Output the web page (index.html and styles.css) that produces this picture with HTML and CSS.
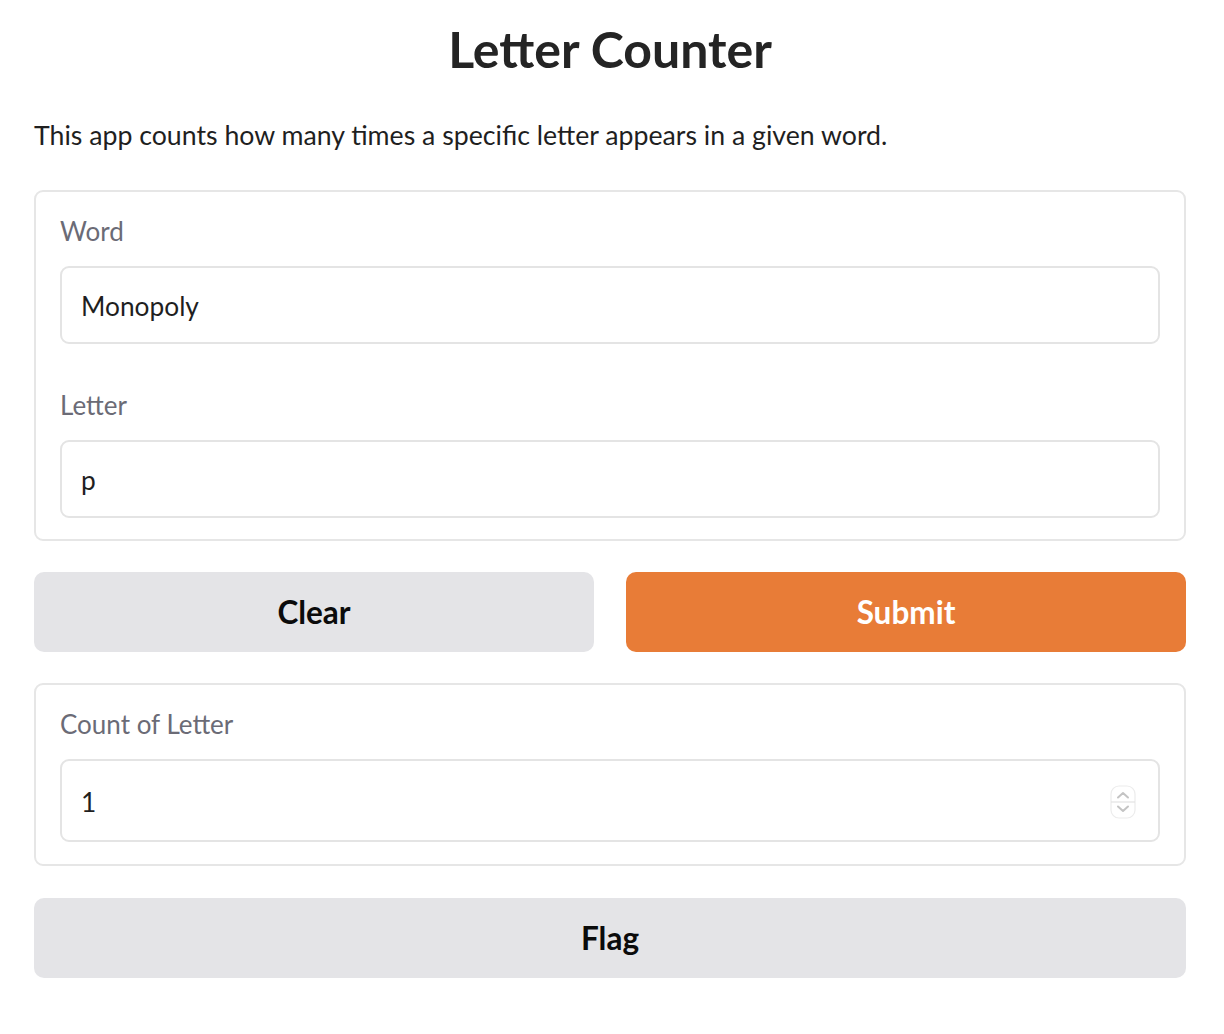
FILE: index.html
```html
<!DOCTYPE html>
<html lang="en">
<head>
<meta charset="utf-8">
<title>Letter Counter</title>
<link rel="stylesheet" href="styles.css">
</head>
<body>
<main class="app">
  <h1 class="title">Letter Counter</h1>
  <p class="desc">This app counts how many times a specific letter appears in a given word.</p>

  <section class="panel panel-input">
    <div class="field">
      <label class="label">Word</label>
      <div class="input">Monopoly</div>
    </div>
    <div class="field">
      <label class="label">Letter</label>
      <div class="input">p</div>
    </div>
  </section>

  <div class="actions">
    <button class="btn btn-secondary">Clear</button>
    <button class="btn btn-primary">Submit</button>
  </div>

  <section class="panel panel-output">
    <div class="field">
      <label class="label">Count of Letter</label>
      <div class="input input-number">
        <span>1</span>
        <span class="spinner">
          <svg width="26" height="34" viewBox="0 0 26 34">
            <rect x="1" y="1" width="24" height="32" rx="8" fill="#fff" stroke="#ececec" stroke-width="1.2"/>
            <line x1="1" y1="17" x2="25" y2="17" stroke="#e2e2e2" stroke-width="1.2"/>
            <path d="M8 12.5 L13 8 L18 12.5" fill="none" stroke="#c4c4c4" stroke-width="2" stroke-linecap="round" stroke-linejoin="round"/>
            <path d="M8 21.5 L13 26 L18 21.5" fill="none" stroke="#c4c4c4" stroke-width="2" stroke-linecap="round" stroke-linejoin="round"/>
          </svg>
        </span>
      </div>
    </div>
  </section>

  <button class="btn btn-secondary btn-wide">Flag</button>
</main>
</body>
</html>
```

FILE: styles.css
```css
* { box-sizing: border-box; }

html, body {
  margin: 0;
  padding: 0;
  background: #ffffff;
}

body {
  font-family: "Lato", "Open Sans", "Liberation Sans", sans-serif;
  color: #1f1f1f;
}

.app {
  width: 1152px;
  margin: 0 0 0 34px;
  padding-top: 19px;
  display: flex;
  flex-direction: column;
}

.title {
  margin: 0;
  text-align: center;
  font-size: 50px;
  font-weight: 700;
  line-height: 60px;
  color: #242424;
}

.desc {
  margin: 39px 0 0 0;
  font-size: 26.7px;
  line-height: 34px;
  color: #1f1f1f;
}

.panel {
  border: 2px solid #e6e6e6;
  border-radius: 9px;
  padding: 24px 24px 21px 24px;
  display: flex;
  flex-direction: column;
  gap: 46px;
}

.panel-input {
  margin-top: 38px;
}

.panel-output {
  margin-top: 31px;
  padding-bottom: 22px;
}

.field {
  display: flex;
  flex-direction: column;
}

.label {
  font-size: 26px;
  line-height: 30px;
  height: 32px;
  margin-bottom: 18px;
  color: #6b6b76;
}

.input {
  height: 78px;
  border: 2px solid #e4e4e4;
  border-radius: 9px;
  padding: 2px 19px 0 19px;
  display: flex;
  align-items: center;
  font-size: 26.3px;
  color: #1f1f1f;
}

.input-number {
  height: 83px;
  justify-content: space-between;
  padding-right: 22px;
}

.spinner {
  display: flex;
}

.actions {
  margin-top: 31px;
  display: grid;
  grid-template-columns: 1fr 1fr;
  gap: 32px;
}

.btn {
  height: 80px;
  border: none;
  border-radius: 10px;
  font-family: inherit;
  font-size: 31.5px;
  font-weight: 700;
  padding: 0;
  cursor: pointer;
}

.btn-secondary {
  background: #e4e4e7;
  color: #0b0b0b;
}

.btn-primary {
  background: #e87c37;
  color: #ffffff;
}

.btn-wide {
  margin-top: 32px;
  width: 100%;
}
```
